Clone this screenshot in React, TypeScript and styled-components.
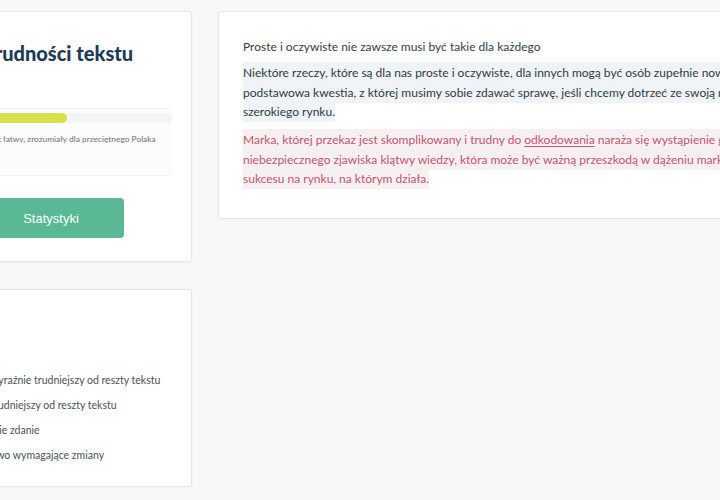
import styled, { createGlobalStyle } from 'styled-components';

const GlobalStyle = createGlobalStyle`
  html, body {
    margin:0;
    padding:0;
    background:#f7f8f9;
    overflow:hidden;
  }
  body{
    width:720px;
    height:500px;
    font-family:Lato, "Open Sans", sans-serif;
  }
`;

const legend = [
  { color: '#f3c7cf', label: 'Fragment wyraźnie trudniejszy od reszty tekstu' },
  { color: '#f7e3c1', label: 'Fragment trudniejszy od reszty tekstu' },
  { color: '#dfe7ef', label: 'Bardzo długie zdanie' },
  { color: '#c4506c', label: 'Rzadkie słowo wymagające zmiany' },
];

export default function App() {
  return (
    <>
      <GlobalStyle />
      <Page>
        <Sidebar>
          <Card>
            <Title>Poziom trudności tekstu</Title>
            <ScorePanel>
              <Track>
                <Fill style={{ width: '59%' }} />
              </Track>
              <Caption>Tekst łatwy, zrozumiały dla przeciętnego Polaka</Caption>
            </ScorePanel>
            <Button>Statystyki</Button>
          </Card>
          <Card>
            <Title>Legenda</Title>
            <LegendList>
              {legend.map(item => (
                <LegendItem key={item.label}>
                  <Swatch color={item.color} />
                  {item.label}
                </LegendItem>
              ))}
            </LegendList>
          </Card>
        </Sidebar>
        <Editor>
          <Lead>Proste i oczywiste nie zawsze musi być takie dla każdego</Lead>
          <Para>
            <Mark tone="blue">
              Niektóre rzeczy, które są dla nas proste i oczywiste, dla innych mogą być osób zupełnie nowe. To<br />
              podstawowa kwestia, z której musimy sobie zdawać sprawę, jeśli chcemy dotrzeć ze swoją marką do<br />
              szerokiego rynku.
            </Mark>
          </Para>
          <Para red>
            <Mark tone="red">
              Marka, której przekaz jest skomplikowany i trudny do <Word>odkodowania</Word> naraża się wystąpienie groźnego<br />
              niebezpiecznego zjawiska klątwy wiedzy, która może być ważną przeszkodą w dążeniu marki do<br />
              sukcesu na rynku, na którym działa.
            </Mark>
          </Para>
        </Editor>
      </Page>
    </>
  );
}

const Page = styled.div`
  display:flex;
  align-items:flex-start;
  gap:26px;
  padding-top:11px;
  margin-left:-110px;
`;

const Sidebar = styled.div`
  display:flex;
  flex-direction:column;
  gap:27px;
  width:302px;
  flex-shrink:0;
`;

const Card = styled.div`
  background:#fff;
  border:1px solid #e4e6e9;
  border-radius:3px;
  box-shadow:0 1px 3px rgba(0,0,0,0.03);
  padding:29px 19px 23px 25px;
  display:flex;
  flex-direction:column;

  & + & {
    height:198px;
    box-sizing:border-box;
  }
`;

const Title = styled.h2`
  margin:0;
  font-family:Lato, sans-serif;
  font-weight:900;
  font-size:20px;
  line-height:24px;
  color:#1e3a56;
  white-space:nowrap;
`;

const ScorePanel = styled.div`
  margin-top:43px;
  background:#fcfcfc;
  border-top:1px solid #f1f2f3;
  border-bottom:1px solid #f1f2f3;
  padding:4px 0 30px;
`;

const Track = styled.div`
  height:10px;
  background:#f3f4f5;
  border-radius:5px;
  overflow:hidden;
`;

const Fill = styled.div`
  height:100%;
  background:#d5e04a;
  border-radius:5px;
`;

const Caption = styled.div`
  margin-top:11px;
  margin-left:66px;
  font-size:8.4px;
  line-height:11px;
  color:#6b7078;
  white-space:nowrap;
`;

const Button = styled.button`
  align-self:flex-start;
  margin-top:22px;
  margin-left:62px;
  width:146px;
  height:40px;
  border:none;
  border-radius:4px;
  background:#5bb894;
  color:#fff;
  font-family:"Liberation Sans", Arial, sans-serif;
  font-size:13px;
  cursor:pointer;
`;

const LegendList = styled.ul`
  list-style:none;
  margin:29px 0 0;
  padding:0;
  display:flex;
  flex-direction:column;
  gap:10px;
`;

const LegendItem = styled.li`
  display:flex;
  align-items:center;
  gap:8px;
  height:15px;
  font-size:10.5px;
  color:#4b5058;
  white-space:nowrap;
`;

const Swatch = styled.span<{ color: string }>`
  width:20px;
  height:10px;
  border-radius:2px;
  background:${p => p.color};
  flex-shrink:0;
`;

const Editor = styled.div`
  flex-shrink:0;
  width:640px;
  height:208px;
  box-sizing:border-box;
  background:#fff;
  border:1px solid #e4e6e9;
  border-radius:3px;
  box-shadow:0 1px 3px rgba(0,0,0,0.03);
  padding:25px 24px;
`;

const Lead = styled.p`
  margin:0 0 6px;
  font-size:12px;
  line-height:20px;
  color:#343c44;
`;

const Para = styled.p<{ red?: boolean }>`
  margin:0 0 8.5px;
  font-size:12px;
  line-height:19.5px;
  white-space:nowrap;
  color:${p => p.red ? '#c25570' : '#2f3a45'};
`;

const Mark = styled.span<{ tone: 'blue' | 'red' }>`
  background:${p => p.tone === 'red' ? '#f6f0f2' : '#f0f4f8'};
  padding:3px 0;
`;

const Word = styled.span`
  text-decoration:underline;
  text-underline-offset:2px;
`;
